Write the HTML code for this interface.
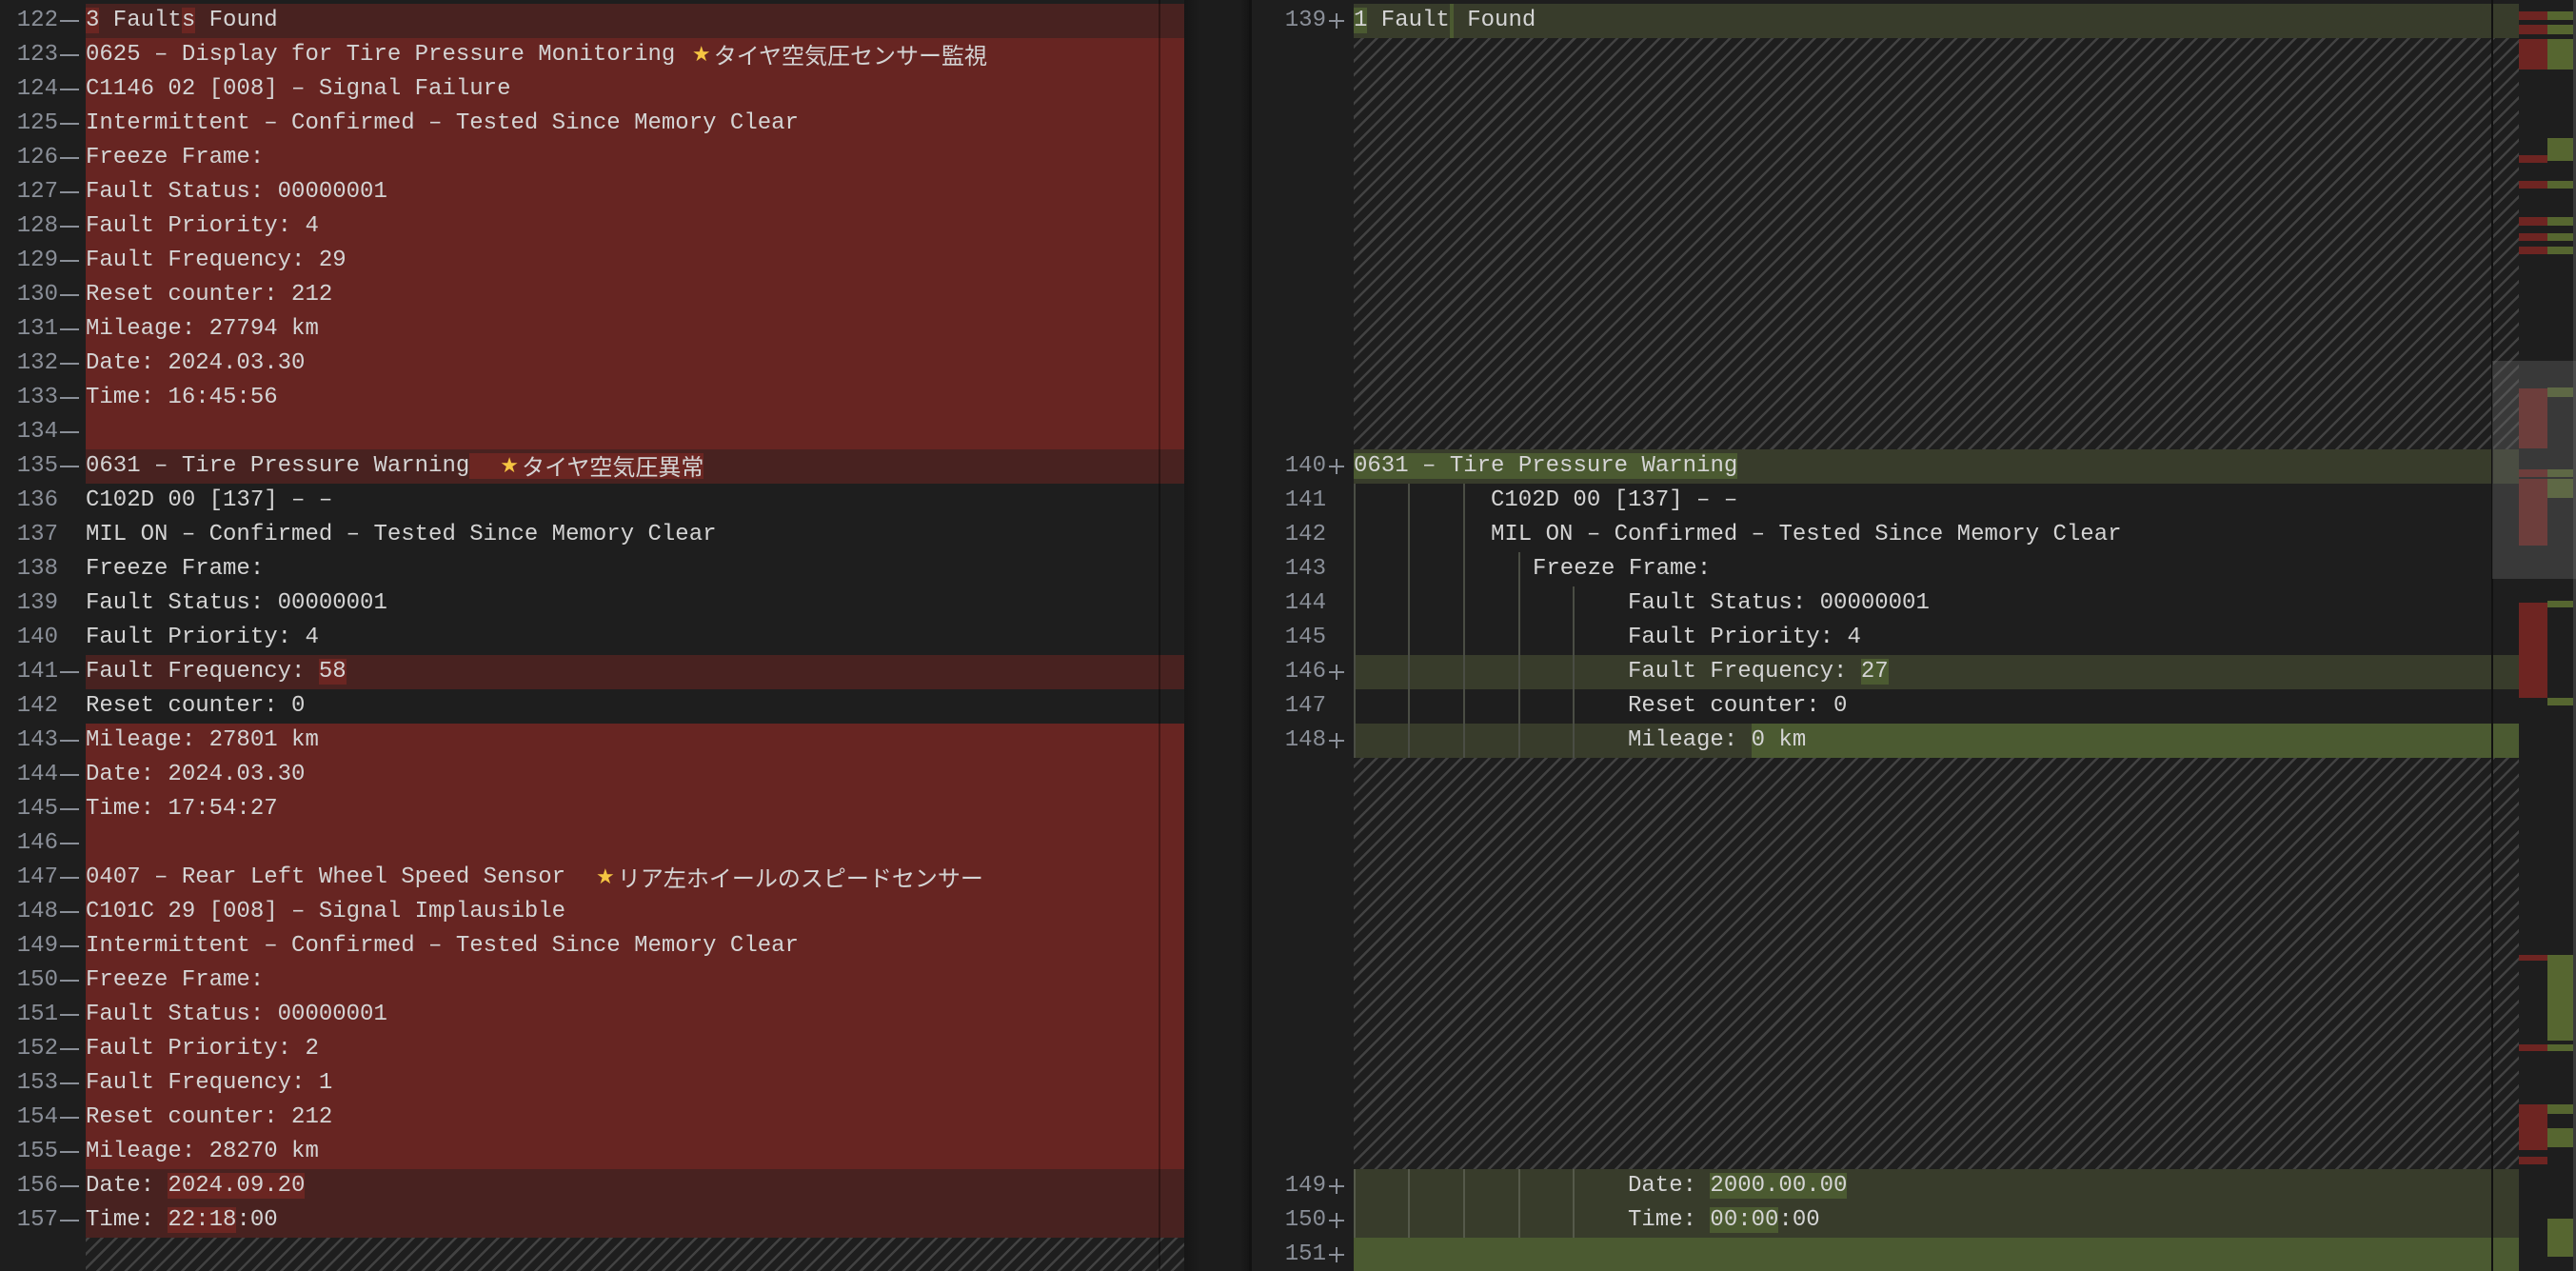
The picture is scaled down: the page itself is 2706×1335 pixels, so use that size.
<!DOCTYPE html>
<html><head><meta charset="utf-8">
<style>
*{margin:0;padding:0;box-sizing:border-box}
html,body{width:2706px;height:1335px;overflow:hidden;background:#1e1e1e}
body{position:relative;font-family:"Liberation Mono","Noto Sans CJK JP",monospace;font-size:24px;color:#d4d4d4}
.row{position:absolute;height:36px;line-height:36px;white-space:pre;overflow:hidden}
.L{left:90px;width:1154px}
.R{left:1422px;width:1224px}
.r{background:#672522}
.d{background:#482220}
.d h{background:#6b2622}
.g{background:#383c2b}
.g h{background:#4b5a31}
h{font-weight:normal;display:inline}
.num{position:absolute;height:36px;line-height:36px;color:#8a8f98;text-align:right}
.ln{left:0;width:61px}
.rn{left:1300px;width:93px}
.dash{position:absolute;left:63px;width:20px;height:2px;background:#8a8f98}
.plus{position:absolute;left:1396px;width:16px;height:16px}
.plus:before{content:"";position:absolute;left:0;top:7px;width:16px;height:2px;background:#8a8f98}
.plus:after{content:"";position:absolute;left:7px;top:0;width:2px;height:16px;background:#8a8f98}
.hatch{position:absolute;background:repeating-linear-gradient(-45deg,#1e1e1e 0 8px,#424242 8px 10.5px)}
.star{display:inline-block;vertical-align:top;height:36px;line-height:36px;width:26px;color:#f5c542;font-family:"DejaVu Sans",sans-serif;text-align:center;font-size:22px}
.cjk{display:inline-block;vertical-align:top;height:36px;line-height:34px;font-family:"Noto Sans CJK JP",sans-serif}
.guide{position:absolute;width:2px;background:#4a4d44}
.mm{position:absolute}
</style></head><body>

<!-- left pane -->
<div class="row L d" style="top:4px"><h>3</h> Fault<h>s</h> Found</div>
<div class="row L r" style="top:40px">0625 – Display for Tire Pressure Monitoring <span class="star">★</span><span class="cjk">タイヤ空気圧センサー監視</span></div>
<div class="row L r" style="top:76px">C1146 02 [008] – Signal Failure</div>
<div class="row L r" style="top:112px">Intermittent – Confirmed – Tested Since Memory Clear</div>
<div class="row L r" style="top:148px">Freeze Frame:</div>
<div class="row L r" style="top:184px">Fault Status: 00000001</div>
<div class="row L r" style="top:220px">Fault Priority: 4</div>
<div class="row L r" style="top:256px">Fault Frequency: 29</div>
<div class="row L r" style="top:292px">Reset counter: 212</div>
<div class="row L r" style="top:328px">Mileage: 27794 km</div>
<div class="row L r" style="top:364px">Date: 2024.03.30</div>
<div class="row L r" style="top:400px">Time: 16:45:56</div>
<div class="row L r" style="top:436px"></div>
<div class="row L d" style="top:472px">0631 – Tire Pressure Warning<h>  <span class="star">★</span><span class="cjk">タイヤ空気圧異常</span></h></div>
<div class="row L" style="top:508px">C102D 00 [137] – –</div>
<div class="row L" style="top:544px">MIL ON – Confirmed – Tested Since Memory Clear</div>
<div class="row L" style="top:580px">Freeze Frame:</div>
<div class="row L" style="top:616px">Fault Status: 00000001</div>
<div class="row L" style="top:652px">Fault Priority: 4</div>
<div class="row L d" style="top:688px">Fault Frequency: <h>58</h></div>
<div class="row L" style="top:724px">Reset counter: 0</div>
<div class="row L r" style="top:760px">Mileage: 27801 km</div>
<div class="row L r" style="top:796px">Date: 2024.03.30</div>
<div class="row L r" style="top:832px">Time: 17:54:27</div>
<div class="row L r" style="top:868px"></div>
<div class="row L r" style="top:904px">0407 – Rear Left Wheel Speed Sensor  <span class="star">★</span><span class="cjk">リア左ホイールのスピードセンサー</span></div>
<div class="row L r" style="top:940px">C101C 29 [008] – Signal Implausible</div>
<div class="row L r" style="top:976px">Intermittent – Confirmed – Tested Since Memory Clear</div>
<div class="row L r" style="top:1012px">Freeze Frame:</div>
<div class="row L r" style="top:1048px">Fault Status: 00000001</div>
<div class="row L r" style="top:1084px">Fault Priority: 2</div>
<div class="row L r" style="top:1120px">Fault Frequency: 1</div>
<div class="row L r" style="top:1156px">Reset counter: 212</div>
<div class="row L r" style="top:1192px">Mileage: 28270 km</div>
<div class="row L d" style="top:1228px">Date: <h>2024.09.20</h></div>
<div class="row L d" style="top:1264px">Time: <h>22:18</h>:00</div>
<div class="hatch" style="left:90px;top:1300px;width:1154px;height:35px"></div>

<!-- left gutter -->
<div class="num ln" style="top:4px">122</div><div class="dash" style="top:21px"></div>
<div class="num ln" style="top:40px">123</div><div class="dash" style="top:57px"></div>
<div class="num ln" style="top:76px">124</div><div class="dash" style="top:93px"></div>
<div class="num ln" style="top:112px">125</div><div class="dash" style="top:129px"></div>
<div class="num ln" style="top:148px">126</div><div class="dash" style="top:165px"></div>
<div class="num ln" style="top:184px">127</div><div class="dash" style="top:201px"></div>
<div class="num ln" style="top:220px">128</div><div class="dash" style="top:237px"></div>
<div class="num ln" style="top:256px">129</div><div class="dash" style="top:273px"></div>
<div class="num ln" style="top:292px">130</div><div class="dash" style="top:309px"></div>
<div class="num ln" style="top:328px">131</div><div class="dash" style="top:345px"></div>
<div class="num ln" style="top:364px">132</div><div class="dash" style="top:381px"></div>
<div class="num ln" style="top:400px">133</div><div class="dash" style="top:417px"></div>
<div class="num ln" style="top:436px">134</div><div class="dash" style="top:453px"></div>
<div class="num ln" style="top:472px">135</div><div class="dash" style="top:489px"></div>
<div class="num ln" style="top:508px">136</div>
<div class="num ln" style="top:544px">137</div>
<div class="num ln" style="top:580px">138</div>
<div class="num ln" style="top:616px">139</div>
<div class="num ln" style="top:652px">140</div>
<div class="num ln" style="top:688px">141</div><div class="dash" style="top:705px"></div>
<div class="num ln" style="top:724px">142</div>
<div class="num ln" style="top:760px">143</div><div class="dash" style="top:777px"></div>
<div class="num ln" style="top:796px">144</div><div class="dash" style="top:813px"></div>
<div class="num ln" style="top:832px">145</div><div class="dash" style="top:849px"></div>
<div class="num ln" style="top:868px">146</div><div class="dash" style="top:885px"></div>
<div class="num ln" style="top:904px">147</div><div class="dash" style="top:921px"></div>
<div class="num ln" style="top:940px">148</div><div class="dash" style="top:957px"></div>
<div class="num ln" style="top:976px">149</div><div class="dash" style="top:993px"></div>
<div class="num ln" style="top:1012px">150</div><div class="dash" style="top:1029px"></div>
<div class="num ln" style="top:1048px">151</div><div class="dash" style="top:1065px"></div>
<div class="num ln" style="top:1084px">152</div><div class="dash" style="top:1101px"></div>
<div class="num ln" style="top:1120px">153</div><div class="dash" style="top:1137px"></div>
<div class="num ln" style="top:1156px">154</div><div class="dash" style="top:1173px"></div>
<div class="num ln" style="top:1192px">155</div><div class="dash" style="top:1209px"></div>
<div class="num ln" style="top:1228px">156</div><div class="dash" style="top:1245px"></div>
<div class="num ln" style="top:1264px">157</div><div class="dash" style="top:1281px"></div>

<div style="position:absolute;left:1217px;top:0;width:2px;height:1335px;background:rgba(0,0,0,0.35)"></div>
<!-- divider -->
<div style="position:absolute;left:1244px;top:0;width:69px;height:1335px;background:linear-gradient(90deg,#161616,#1c1c1c 25%,#1c1c1c 85%,#151515)"></div>
<div style="position:absolute;left:1312px;top:0;width:3px;height:1335px;background:#121212"></div>

<!-- right pane -->
<div class="row R g" style="top:4px"><h>1</h> Fault<h style="display:inline-block;width:4px;height:36px;vertical-align:top"></h> Found</div>
<div class="hatch" style="left:1422px;top:40px;width:1224px;height:432px"></div>
<div class="row R g" style="top:472px"><h>0631 – Tire Pressure Warning</h></div>
<div class="row R" style="top:508px;padding-left:144px">C102D 00 [137] – –</div>
<div class="row R" style="top:544px;padding-left:144px">MIL ON – Confirmed – Tested Since Memory Clear</div>
<div class="row R" style="top:580px;padding-left:188px">Freeze Frame:</div>
<div class="row R" style="top:616px;padding-left:288px">Fault Status: 00000001</div>
<div class="row R" style="top:652px;padding-left:288px">Fault Priority: 4</div>
<div class="row R g" style="top:688px;padding-left:288px">Fault Frequency: <h>27</h></div>
<div class="row R" style="top:724px;padding-left:288px">Reset counter: 0</div>
<div class="row R g" style="top:760px;padding-left:288px">Mileage: <h style="display:inline-block;width:860px">0 km</h></div>
<div class="hatch" style="left:1422px;top:796px;width:1224px;height:432px"></div>
<div class="row R g" style="top:1228px;padding-left:288px">Date: <h>2000.00.00</h></div>
<div class="row R g" style="top:1264px;padding-left:288px">Time: <h>00:00</h>:00</div>
<div class="row R" style="top:1300px;background:#4b5a31"></div>

<!-- indent guides -->
<div class="guide" style="left:1422px;top:508px;height:288px"></div>
<div class="guide" style="left:1479px;top:508px;height:288px"></div>
<div class="guide" style="left:1537px;top:508px;height:288px"></div>
<div class="guide" style="left:1595px;top:580px;height:216px"></div>
<div class="guide" style="left:1652px;top:616px;height:180px"></div>
<div class="guide" style="left:1422px;top:1228px;height:72px;background:#55594a"></div>
<div class="guide" style="left:1479px;top:1228px;height:72px;background:#55594a"></div>
<div class="guide" style="left:1537px;top:1228px;height:72px;background:#55594a"></div>
<div class="guide" style="left:1595px;top:1228px;height:72px;background:#55594a"></div>
<div class="guide" style="left:1652px;top:1228px;height:72px;background:#55594a"></div>

<!-- right gutter -->
<div class="num rn" style="top:4px">139</div><div class="plus" style="top:14px"></div>
<div class="num rn" style="top:472px">140</div><div class="plus" style="top:482px"></div>
<div class="num rn" style="top:508px">141</div>
<div class="num rn" style="top:544px">142</div>
<div class="num rn" style="top:580px">143</div>
<div class="num rn" style="top:616px">144</div>
<div class="num rn" style="top:652px">145</div>
<div class="num rn" style="top:688px">146</div><div class="plus" style="top:698px"></div>
<div class="num rn" style="top:724px">147</div>
<div class="num rn" style="top:760px">148</div><div class="plus" style="top:770px"></div>
<div class="num rn" style="top:1228px">149</div><div class="plus" style="top:1238px"></div>
<div class="num rn" style="top:1264px">150</div><div class="plus" style="top:1274px"></div>
<div class="num rn" style="top:1300px">151</div><div class="plus" style="top:1310px"></div>

<div style="position:absolute;left:2617px;top:0;width:2px;height:1335px;background:#111"></div>

<!-- minimap -->
<div class="mm" style="left:2646px;top:0;width:60px;height:1335px;background:#1e1e1e"></div>
<div class="mm" style="left:2646px;top:12px;width:30px;height:9px;background:#6e2522"></div>
<div class="mm" style="left:2676px;top:12px;width:30px;height:9px;background:#566630"></div>
<div class="mm" style="left:2646px;top:26px;width:30px;height:10px;background:#6e2522"></div>
<div class="mm" style="left:2676px;top:26px;width:30px;height:10px;background:#566630"></div>
<div class="mm" style="left:2646px;top:41px;width:30px;height:32px;background:#6e2522"></div>
<div class="mm" style="left:2676px;top:41px;width:30px;height:32px;background:#566630"></div>
<div class="mm" style="left:2676px;top:145px;width:30px;height:24px;background:#566630"></div>
<div class="mm" style="left:2646px;top:163px;width:30px;height:8px;background:#6e2522"></div>
<div class="mm" style="left:2646px;top:190px;width:30px;height:8px;background:#6e2522"></div>
<div class="mm" style="left:2676px;top:190px;width:30px;height:8px;background:#566630"></div>
<div class="mm" style="left:2646px;top:228px;width:30px;height:9px;background:#6e2522"></div>
<div class="mm" style="left:2676px;top:228px;width:30px;height:9px;background:#566630"></div>
<div class="mm" style="left:2646px;top:245px;width:30px;height:8px;background:#6e2522"></div>
<div class="mm" style="left:2676px;top:245px;width:30px;height:8px;background:#566630"></div>
<div class="mm" style="left:2646px;top:259px;width:30px;height:8px;background:#6e2522"></div>
<div class="mm" style="left:2676px;top:259px;width:30px;height:8px;background:#566630"></div>
<div class="mm" style="left:2676px;top:407px;width:30px;height:10px;background:#566630"></div>
<div class="mm" style="left:2646px;top:408px;width:30px;height:63px;background:#6e2522"></div>
<div class="mm" style="left:2646px;top:493px;width:30px;height:8px;background:#6e2522"></div>
<div class="mm" style="left:2676px;top:493px;width:30px;height:8px;background:#566630"></div>
<div class="mm" style="left:2646px;top:503px;width:30px;height:70px;background:#6e2522"></div>
<div class="mm" style="left:2676px;top:503px;width:30px;height:20px;background:#566630"></div>
<div class="mm" style="left:2676px;top:631px;width:30px;height:7px;background:#566630"></div>
<div class="mm" style="left:2646px;top:633px;width:30px;height:100px;background:#6e2522"></div>
<div class="mm" style="left:2676px;top:733px;width:30px;height:8px;background:#566630"></div>
<div class="mm" style="left:2646px;top:1003px;width:30px;height:6px;background:#6e2522"></div>
<div class="mm" style="left:2676px;top:1003px;width:30px;height:90px;background:#566630"></div>
<div class="mm" style="left:2646px;top:1097px;width:30px;height:7px;background:#6e2522"></div>
<div class="mm" style="left:2676px;top:1097px;width:30px;height:7px;background:#566630"></div>
<div class="mm" style="left:2646px;top:1160px;width:30px;height:48px;background:#6e2522"></div>
<div class="mm" style="left:2676px;top:1160px;width:30px;height:10px;background:#566630"></div>
<div class="mm" style="left:2676px;top:1185px;width:30px;height:20px;background:#566630"></div>
<div class="mm" style="left:2646px;top:1215px;width:30px;height:8px;background:#6e2522"></div>
<div class="mm" style="left:2676px;top:1280px;width:30px;height:40px;background:#566630"></div>
<div class="mm" style="left:2703px;top:0;width:3px;height:1335px;background:#3a3a3a"></div>
<!-- viewport overlay -->
<div class="mm" style="left:2618px;top:379px;width:88px;height:229px;background:rgba(110,110,110,0.35)"></div>
</body></html>
